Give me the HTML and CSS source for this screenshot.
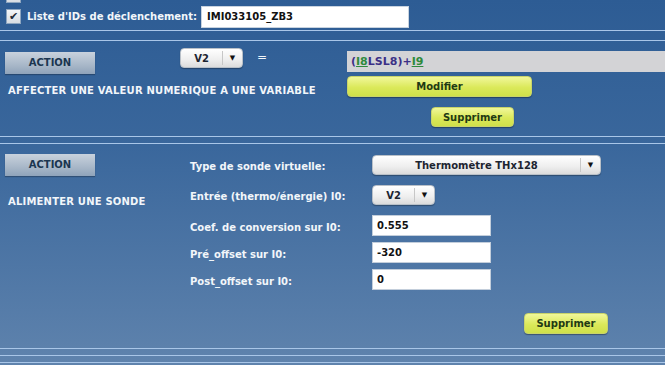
FILE: index.html
```html
<!DOCTYPE html>
<html lang="fr">
<head>
  <meta charset="UTF-8">
  <title>Actions</title>
  <link rel="stylesheet" href="styles.css">
</head>
<body>

  <div class="row-cut">
    <span class="chk"></span>
  </div>

  <div class="row-ids">
    <span class="chk checked">&#10004;</span>
    <label class="ids-label">Liste d'IDs de déclenchement:</label>
    <div class="ids-input" contenteditable="true">IMI033105_ZB3</div>
  </div>

  <div class="sep"></div>

  <div class="sec sec-affect">
    <div class="col-left">
      <div class="head-row">
        <div class="action-btn">ACTION</div>
        <div class="sel sel-small">
          <span class="sel-val">V2</span>
          <span class="sel-arrow">&#9660;</span>
        </div>
        <span class="equals">=</span>
      </div>
      <div class="action-name">AFFECTER UNE VALEUR NUMERIQUE A UNE VARIABLE</div>
    </div>
    <div class="col-right">
      <div class="expr">
        <span class="op">(</span><a class="var">I8</a><span class="op">LSL8)+</span><a class="var">I9</a>
      </div>
      <button class="btn-yellow btn-wide">Modifier</button>
      <button class="btn-yellow btn-del1">Supprimer</button>
    </div>
  </div>

  <div class="sep sep-narrow"></div>

  <div class="sec sec-sonde">
    <div class="col-action">
      <div class="action-btn">ACTION</div>
      <div class="action-name">ALIMENTER UNE SONDE</div>
    </div>
    <div class="col-fields">
      <div class="field f-sel">
        <span class="f-label">Type de sonde virtuelle:</span>
        <div class="sel sel-big">
          <span class="sel-val">Thermomètre THx128</span>
          <span class="sel-arrow">&#9660;</span>
        </div>
      </div>
      <div class="field f-sel">
        <span class="f-label">Entrée (thermo/énergie) I0:</span>
        <div class="sel sel-small">
          <span class="sel-val">V2</span>
          <span class="sel-arrow">&#9660;</span>
        </div>
      </div>
      <div class="field">
        <span class="f-label">Coef. de conversion sur I0:</span>
        <input type="text" class="f-input" value="0.555">
      </div>
      <div class="field">
        <span class="f-label">Pré_offset sur I0:</span>
        <input type="text" class="f-input" value="-320">
      </div>
      <div class="field">
        <span class="f-label">Post_offset sur I0:</span>
        <input type="text" class="f-input" value="0">
      </div>
      <button class="btn-yellow btn-del2">Supprimer</button>
    </div>
  </div>

  <div class="sep sep-narrow"></div>
  <div class="sep-last"></div>

</body>
</html>
```

FILE: styles.css
```css
html {
  background: linear-gradient(#2d5c94, #3a679c 40%, #5f83ad);
  min-height: 100%;
}

body {
  margin: 0;
  font-family: "DejaVu Sans", Verdana, sans-serif;
  font-size: 10px;
  font-weight: bold;
  color: #f2f6fa;
}

/* checkbox */
.chk {
  display: inline-block;
  width: 13px;
  height: 13px;
  border: 1px solid #8ea6c0;
  background: linear-gradient(#f4f6f8, #d8dde3);
  color: #1e2a36;
  font-size: 11px;
  line-height: 13px;
  text-align: center;
}

.row-cut {
  height: 3px;
  overflow: hidden;
  padding-left: 6px;
  display: flex;
  align-items: flex-end;
}

.row-ids {
  display: flex;
  align-items: center;
  height: 27px;
  padding-left: 6px;
}

.ids-label {
  margin-left: 6px;
  width: 174px;
}

.ids-input {
  width: 208px;
  height: 22px;
  line-height: 20px;
  box-sizing: border-box;
  border: 1px solid #c8d3df;
  padding: 0 5px;
  color: #111;
  background: #fff;
  outline: none;
}

/* separators */
.sep {
  height: 9px;
  border-top: 1px solid #a9c6e8;
  border-bottom: 1px solid #a9c6e8;
}

.sep-narrow {
  height: 6px;
}

.sep-last {
  height: 6px;
  border-bottom: 1px solid #a9c6e8;
}

/* action */
.action-btn {
  width: 90px;
  height: 22px;
  line-height: 22px;
  text-align: center;
  color: #1b3650;
  background: linear-gradient(#c9d2dd, #a8b7c8 60%, #8fa3ba);
  box-shadow: 0 1px 1px rgba(0, 0, 0, .25);
}

.action-name {
  padding-left: 8px;
  letter-spacing: 0.2px;
}

/* selects */
.sel {
  display: flex;
  align-items: center;
  height: 20px;
  box-sizing: border-box;
  border: 1px solid #b9c0c8;
  border-radius: 4px;
  background: linear-gradient(#ffffff, #eeeeee 60%, #dcdcdc);
  box-shadow: 0 1px 1px rgba(0, 0, 0, .3);
  color: #1c2430;
}

.sel-val {
  flex: 1;
  text-align: center;
}

.sel-arrow {
  width: 19px;
  border-left: 1px solid #c7c7c7;
  text-align: center;
  font-size: 7px;
  line-height: 14px;
  color: #111;
}

.sel-small {
  width: 63px;
}

.sel-big {
  width: 229px;
}

/* section 1 */
.sec-affect {
  display: grid;
  grid-template-columns: 347px 1fr;
  height: 95px;
}

.head-row {
  display: flex;
  align-items: flex-start;
  padding-top: 7px;
}

.head-row .action-btn {
  margin: 4px 0 0 5px;
}

.head-row .sel {
  margin-left: 85px;
}

.equals {
  margin: 2px 0 0 14px;
  font-weight: normal;
  font-size: 12px;
}

.sec-affect .action-name {
  margin-top: 11px;
}

.col-right {
  padding-top: 10px;
  display: flex;
  flex-direction: column;
  align-items: flex-start;
}

.expr {
  align-self: stretch;
  height: 21px;
  line-height: 21px;
  background: #d3d3d6;
  padding-left: 4px;
  font-size: 11px;
}

.op {
  color: #3b2f86;
}

.var {
  color: #2f8a3c;
  text-decoration: underline;
}

.btn-yellow {
  height: 21px;
  border: 1px solid #c9d46a;
  border-radius: 4px;
  background: linear-gradient(#f1f79a, #dbe95a 55%, #cfe04a);
  box-shadow: 0 1px 1px rgba(0, 0, 0, .35);
  font: inherit;
  color: #1f3a14;
  padding: 0;
}

.btn-wide {
  margin-top: 4px;
  width: 185px;
}

.btn-del1 {
  margin: 10px 0 0 84px;
  width: 83px;
  height: 20px;
}

/* section 2 */
.sec-sonde {
  display: flex;
  height: 204px;
}

.col-action {
  width: 190px;
  padding-top: 10px;
}

.col-action .action-btn {
  margin-left: 5px;
}

.sec-sonde .action-name {
  margin-top: 20px;
}

.col-fields {
  padding-top: 11px;
  display: flex;
  flex-direction: column;
  align-items: flex-start;
}

.field {
  display: flex;
  align-items: center;
  margin-bottom: 6px;
}

.field.f-sel {
  margin-bottom: 10px;
}

.f-label {
  width: 182px;
  padding-top: 3px;
}

.f-input {
  width: 119px;
  height: 21px;
  line-height: 17px;
  box-sizing: border-box;
  border: 1px solid #c3cedb;
  padding: 0 4px;
  font-family: inherit;
  font-size: 10px;
  font-weight: bold;
  color: #111;
  background: #fff;
}

.btn-del2 {
  margin: 17px 0 0 334px;
  width: 84px;
}
```
